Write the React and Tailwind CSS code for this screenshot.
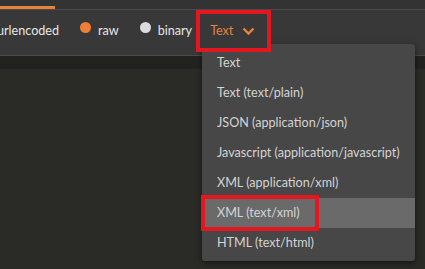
import React from 'react';

const options = [
    'Text',
    'Text (text/plain)',
    'JSON (application/json)',
    'Javascript (application/javascript)',
    'XML (application/xml)',
    'XML (text/xml)',
    'HTML (text/html)',
];

const Radio = ({ checked, label }) => (
    <label className="flex items-center gap-[7px]">
        <span className={`block w-[11px] h-[11px] rounded-full -mt-[6px] ${checked ? 'bg-[#f07e33]' : 'bg-[#dcdcdc]'}`} />
        <span>{label}</span>
    </label>
);

const App = () => {
    const selected = 'XML (text/xml)';

    return (
        <div
            className="relative w-[425px] h-[269px] overflow-hidden bg-[#2a2a27] text-[12.6px] text-[#e6e6e6] whitespace-nowrap"
            style={{ fontFamily: 'Lato, "Open Sans", sans-serif' }}
        >
            {/* tab strip */}
            <div className="h-[10px] bg-[#333333] border-b border-[#4a4a4a] relative">
                <div className="absolute left-0 top-[6px] w-[55px] h-[3px] bg-[#e8823a]" />
            </div>

            {/* body type toolbar */}
            <div className="h-[46px] bg-[#383838] border-b border-[#4b4b4b] flex items-start">
                <div className="flex items-center gap-[21px] h-[42px]">
                    <span className="-ml-[3px]">urlencoded</span>
                    <Radio checked label="raw" />
                    <Radio label="binary" />
                </div>
                <button className="relative z-10 ml-[4px] h-[42px] w-[75px] border-4 border-[#e4161f] flex items-center pl-[10px] gap-[9px] text-[#e0843e] bg-[#383838]">
                    <span>Text</span>
                    <svg width="13" height="9" viewBox="0 0 13 9" fill="none" className="mt-[1px]">
                        <path d="M1.5 1.5 L6.5 6.5 L11.5 1.5" stroke="#e8843a" strokeWidth="2.4" />
                    </svg>
                </button>
            </div>
            <div className="h-[13px] bg-[#222220]" />

            {/* dropdown menu */}
            <div className="absolute left-[202px] top-[44px] w-[213px] pt-[4px] pb-[3px] bg-[#474747] rounded-[3px] shadow-[0_2px_6px_rgba(0,0,0,0.5)] text-[#d4d4d4]">
                {options.map((opt) => (
                    <div
                        key={opt}
                        className={`relative h-[30px] flex items-center pl-[15px] ${opt === selected ? 'bg-[#6a6a6a]' : ''}`}
                    >
                        {opt}
                        {opt === selected && (
                            <span className="absolute -left-[1px] -top-[3px] -bottom-[3px] w-[118px] border-4 border-[#e4161f]" />
                        )}
                    </div>
                ))}
            </div>
        </div>
    );
};

export default App;
